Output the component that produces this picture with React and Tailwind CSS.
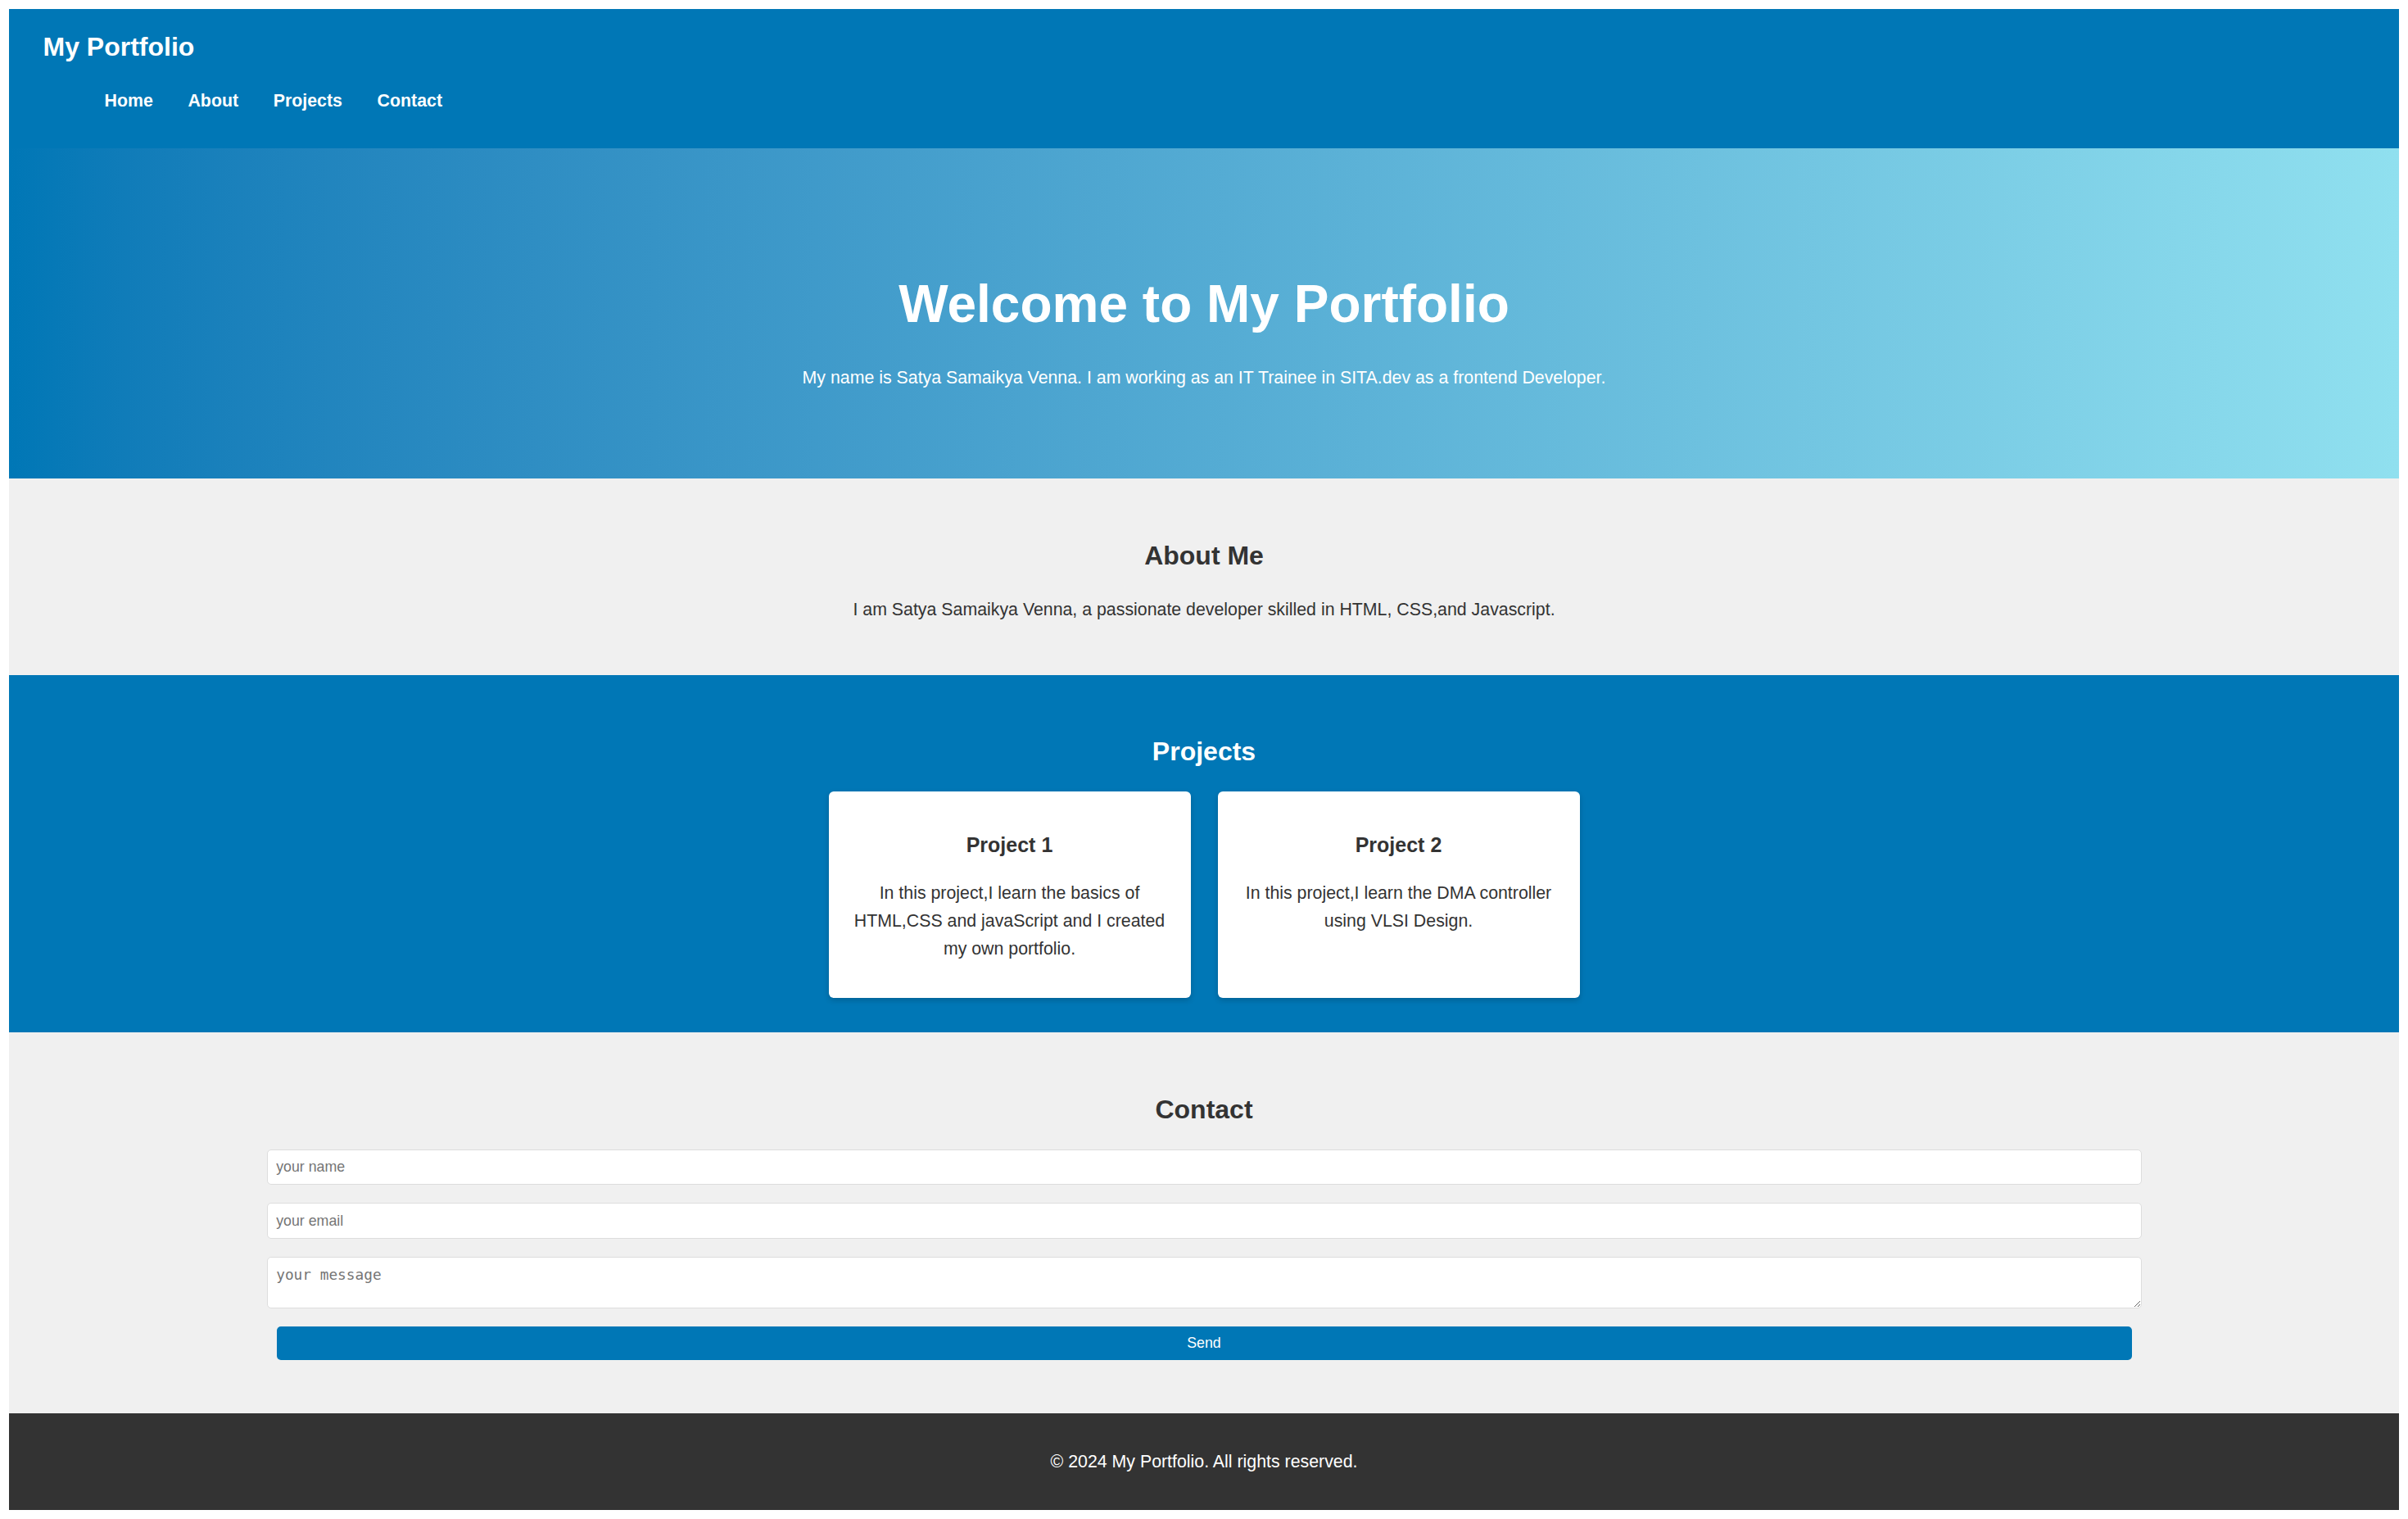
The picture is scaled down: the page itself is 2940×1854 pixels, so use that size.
const navLinks = ['Home', 'About', 'Projects', 'Contact'];

const projects = [
  {
    title: 'Project 1',
    text: 'In this project,I learn the basics of HTML,CSS and javaScript and I created my own portfolio.',
  },
  {
    title: 'Project 2',
    text: 'In this project,I learn the DMA controller using VLSI Design.',
  },
];

function Header() {
  return (
    <header className="h-[170px] bg-[#0077b6] pl-[41.5px] pt-[28px] text-white">
      <h1 className="text-[32px] font-bold leading-[37px]">My Portfolio</h1>
      <nav className="mt-[35px] pl-[75px]">
        <ul className="flex gap-[42.7px] text-[21.33px] font-bold leading-[24.5px]">
          {navLinks.map((link) => (
            <li key={link}>
              <a href={`#${link.toLowerCase()}`}>{link}</a>
            </li>
          ))}
        </ul>
      </nav>
    </header>
  );
}

function Hero() {
  return (
    <section className="h-[403px] bg-linear-to-r from-[#0077b6] to-[#90e0ef] pt-[153.5px] text-center text-white">
      <h2 className="text-[64px] font-bold leading-[73.6px]">Welcome to My Portfolio</h2>
      <p className="mt-[40.5px] text-[21.33px] leading-[24.5px]">
        My name is Satya Samaikya Venna. I am working as an IT Trainee in SITA.dev as a frontend Developer.
      </p>
    </section>
  );
}

function About() {
  return (
    <section id="about" className="h-[240px] bg-[#f0f0f0] pt-[75.5px] text-center text-[#333]">
      <h2 className="text-[32px] font-bold leading-[37px]">About Me</h2>
      <p className="mt-[35px] text-[21.33px] leading-[24.5px]">
        I am Satya Samaikya Venna, a passionate developer skilled in HTML, CSS,and Javascript.
      </p>
    </section>
  );
}

function Projects() {
  return (
    <section id="projects" className="h-[436px] bg-[#0077b6] pt-[74.8px] text-center">
      <h2 className="text-[32px] font-bold leading-[37px] text-white">Projects</h2>
      <div className="mt-[30.2px] flex justify-center gap-[33px]">
        {projects.map((p) => (
          <div
            key={p.title}
            className="h-[252px] w-[442px] rounded-[6px] bg-white px-[26.7px] pt-[51px] text-[#333] shadow-[0_3px_7px_rgba(0,0,0,0.18)]"
          >
            <h3 className="text-[25px] font-bold leading-[28.7px]">{p.title}</h3>
            <p className="mt-[27.5px] text-[21.33px] leading-[34.1px]">{p.text}</p>
          </div>
        ))}
      </div>
    </section>
  );
}

function Contact() {
  const field =
    'w-[2289px] rounded-[5px] border border-[#ddd] bg-white px-[10.7px] text-[17.8px] text-[#333] outline-none placeholder:text-[#757575]';
  return (
    <section id="contact" className="h-[465px] bg-[#f0f0f0] pt-[76px] text-center text-[#333]">
      <h2 className="text-[32px] font-bold leading-[37px]">Contact</h2>
      <form className="mt-[30px] flex flex-col items-center gap-[22px]" onSubmit={(e) => e.preventDefault()}>
        <input type="text" placeholder="your name" className={`${field} h-[43px]`} />
        <input type="email" placeholder="your email" className={`${field} h-[44px]`} />
        <textarea
          placeholder="your message"
          className={`${field} h-[63px] py-[10.7px] font-['DejaVu_Sans_Mono',monospace] leading-[20.7px]`}
        />
        <button
          type="submit"
          className="h-[41px] w-[2265px] rounded-[5px] bg-[#0077b6] text-[17.8px] text-white"
        >
          Send
        </button>
      </form>
    </section>
  );
}

function Footer() {
  return (
    <footer className="flex h-[118px] items-center justify-center bg-[#333] text-[21.33px] leading-[24.5px] text-white">
      <p>© 2024 My Portfolio. All rights reserved.</p>
    </footer>
  );
}

export default function App() {
  return (
    <div className="min-h-[1854px] bg-white p-[11px] font-['Liberation_Sans',Arial,sans-serif]">
      <Header />
      <Hero />
      <About />
      <Projects />
      <Contact />
      <Footer />
    </div>
  );
}
